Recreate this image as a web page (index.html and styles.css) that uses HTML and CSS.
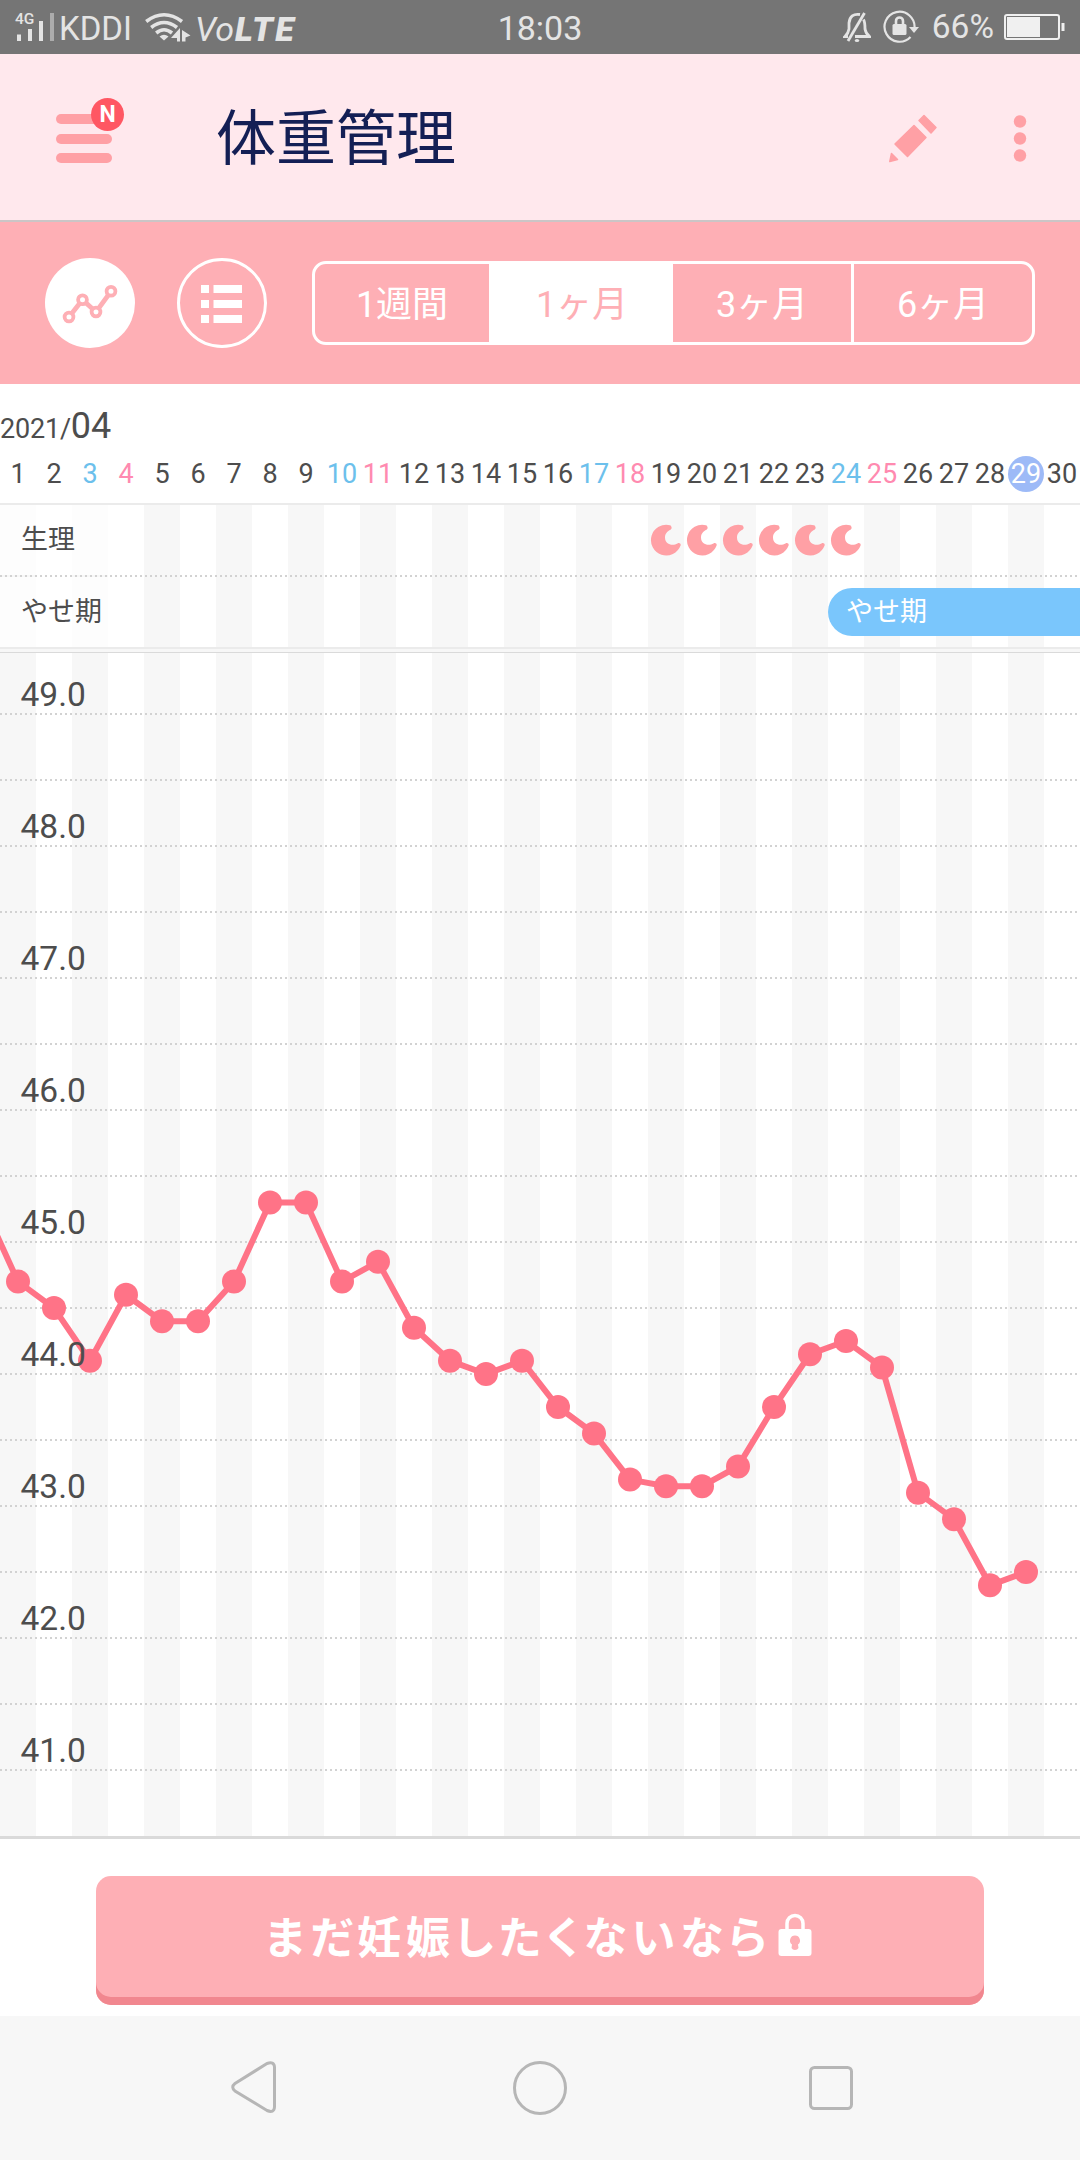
FILE: index.html
```html
<!DOCTYPE html>
<html lang="ja">
<head>
  <meta charset="UTF-8" />
  <meta name="viewport" content="width=device-width, initial-scale=1.0" />
  <title>体重管理</title>
  <link rel="stylesheet" href="styles.css">
</head>
<body>
  <div class="status-bar">
    <div class="status-left">
      <div class="signal">
        <span class="net">4G</span>
        <svg width="40" height="54" viewBox="0 0 40 54">
          <path d="M2 34.5h4v6.5h-4zM13 29h4v12h-4zM24 21h4v20h-4z" fill="#e4e4e4" />
          <path d="M35 13h4v28h-4z" fill="#acacac" />
        </svg>
      </div>
      <span class="carrier">KDDI</span>
      <svg class="wifi" width="46" height="54" viewBox="0 0 46 54">
        <g fill="none" stroke="#e4e4e4" stroke-width="3.6">
          <path d="M1.2 21.5Q19 8 37 21.500" />
          <path d="M6.200 27.500Q19 17.500 32 27.500" />
          <path d="M11.200 33Q19 26.500 27 33" />
        </g>
        <path d="M14.500 36.500Q19 33 23.500 36.500L19 40.500z" fill="#e4e4e4" />
        <path d="M35 28v13.500h-3v-3.500h-6zM37 41.500v-11.500l8.500 5.500-5 2v4z" fill="#e4e4e4" />
      </svg>
      <span class="volte">Vo<b>LTE</b></span>
    </div>
    <span class="clock">18:03</span>
    <div class="status-right">
      <svg width="28" height="54" viewBox="0 0 28 54">
        <path d="M17 14.500Q7 13 6 23v6Q5.500 33 2 36.500h3M20.500 19.500Q22 22 22 29Q22.500 33 26.500 36.500H12" fill="none" stroke="#e4e4e4" stroke-width="2.800" />
        <path d="M21.500 13L5 41" stroke="#e4e4e4" stroke-width="2.800" />
        <ellipse cx="14" cy="40.500" rx="2.200" ry="1.600" fill="#e4e4e4" />
      </svg>
      <svg class="rotate" width="38" height="54" viewBox="0 0 38 54">
        <path d="M27.500 37A15 15 0 1 1 31.500 28" fill="none" stroke="#e4e4e4" stroke-width="2.200" />
        <path d="M26 27h10l-5 6z" fill="#e4e4e4" />
        <rect x="9.500" y="24" width="14" height="11" rx="1.500" fill="#e4e4e4" />
        <path d="M13 25v-4a3.500 3.500 0 0 1 7 0v4" fill="none" stroke="#e4e4e4" stroke-width="2.600" />
      </svg>
      <span class="percent">66%</span>
      <svg width="61" height="54" viewBox="0 0 61 54">
        <rect x="1" y="15" width="54" height="24" rx="2" fill="none" stroke="#f0f0f0" stroke-width="2" />
        <path d="M3 17h33v20h-33zM57.500 23h3v8h-3z" fill="#f0f0f0" />
      </svg>
    </div>
  </div>

  <header>
    <div class="menu">
      <span class="bar"></span>
      <span class="bar"></span>
      <span class="bar"></span>
      <span class="badge">N</span>
    </div>
    <h1>体重管理</h1>
    <svg class="pencil" width="50" height="50" viewBox="0 0 50 50">
      <g fill="#ffa0a5" stroke="#ffa0a5" stroke-width="1.500" stroke-linejoin="round">
        <path d="M36 1.500L48 13.500L43 19L31 6.500z" />
        <path d="M26 11.500L38 23.500L19.500 42.500L7 30z" />
        <path d="M3.500 39.500L9.500 45.500L1.800 47.500z" />
      </g>
    </svg>
    <svg class="more" width="14" height="50" viewBox="0 0 14 50">
      <g fill="#ffa0a5">
        <circle cx="7" cy="7.500" r="6.200" />
        <circle cx="7" cy="24.500" r="6.200" />
        <circle cx="7" cy="41.500" r="6.200" />
      </g>
    </svg>
  </header>

  <div class="toolbar">
    <svg class="round" width="90" height="90" viewBox="0 0 90 90">
      <circle cx="45" cy="45" r="45" fill="#fff" />
      <path d="M24 59L37.500 41.700L51 54L66 33.300" fill="none" stroke="#feafb5" stroke-width="4.800" />
      <g fill="#fff" stroke="#feafb5" stroke-width="3.800">
        <circle cx="24" cy="59" r="4.400" />
        <circle cx="37.500" cy="41.700" r="4.400" />
        <circle cx="51" cy="54" r="4.400" />
        <circle cx="66" cy="33.300" r="4.400" />
      </g>
    </svg>
    <svg class="round" width="90" height="90" viewBox="0 0 90 90">
      <circle cx="45" cy="45" r="43.500" fill="none" stroke="#fff" stroke-width="3" />
      <path d="M24 27h8v8h-8zM36.500 27h28.500v8h-28.500zM24 42h8v8h-8zM36.500 42h28.500v8h-28.500zM24 57h8v8h-8zM36.500 57h28.500v8h-28.500z" fill="#fff" />
    </svg>
    <div class="tabs">
      <div class="tab">1週間</div>
      <div class="tab active">1ヶ月</div>
      <div class="tab">3ヶ月</div>
      <div class="tab last">6ヶ月</div>
    </div>
  </div>

  <main>
    <p class="month">2021/<span>04</span></p>
    <div class="days" id="days"></div>

    <div class="rows">
      <div class="row">
        <div class="label">生理</div>
        <svg class="moons" id="moons" width="216" height="36" viewBox="0 0 216 36"></svg>
      </div>
      <div class="row">
        <div class="label">やせ期</div>
        <div class="period">やせ期</div>
      </div>
    </div>

    <svg class="chart" id="chart" width="1080" height="1184" viewBox="0 652 1080 1184"></svg>
  </main>

  <div class="banner">
    <div class="cta">
      <span>まだ妊娠したくないなら</span>
      <svg width="34" height="44" viewBox="0 0 34 44">
        <path d="M9 18v-7.500a8 8 0 0 1 16 0v7.500" fill="none" stroke="#fff" stroke-width="3.500" />
        <rect x="0.500" y="16" width="33" height="27" rx="3" fill="#fff" />
        <path d="M17 22.500a5 5 0 0 1 3 9l0.500 3.500q-1 2-3.500 2t-3.500-2l0.500-3.500a5 5 0 0 1 3-9z" fill="#feafb5" />
      </svg>
    </div>
  </div>

  <nav>
    <svg width="46" height="54" viewBox="0 0 46 54">
      <path d="M36 2.500L4 22.500Q-0.500 26 4 30L36 49.500Q43 52.500 43.500 46V6Q43 0 36 2.500z" fill="none" stroke="#b6b6b6" stroke-width="3" />
    </svg>
    <svg class="home" width="54" height="54" viewBox="0 0 54 54">
      <circle cx="27" cy="27" r="25.500" fill="none" stroke="#b6b6b6" stroke-width="3" />
    </svg>
    <svg width="44" height="44" viewBox="0 0 44 44">
      <rect x="1.500" y="1.500" width="41" height="41" rx="4" fill="none" stroke="#b6b6b6" stroke-width="3" />
    </svg>
  </nav>

  <script>
    const colW = 36;
    const today = 29;
    // first value is 3/31, just off the left edge
    const weights = [
      45.3, 44.7, 44.5, 44.1, 44.6, 44.4, 44.4, 44.7, 45.3, 45.3, 44.7,
      44.85, 44.35, 44.1, 44.0, 44.1, 43.75, 43.55, 43.2, 43.15, 43.15,
      43.3, 43.75, 44.15, 44.25, 44.05, 43.1, 42.9, 42.4, 42.5
    ];
    const yOf = kg => 714 + (49 - kg) * 132;

    // day header
    let days = '';
    for (let d = 1; d <= 30; d++) {
      let cls = 'day';
      if (d % 7 === 3) cls += ' sat';
      if (d % 7 === 4) cls += ' sun';
      if (d === today) cls += ' today';
      days += `<span class="${cls}">${d}</span>`;
    }
    document.getElementById('days').innerHTML = days;

    // period marks, 19th to 24th
    let moons = '';
    for (let i = 0; i < 6; i++) {
      moons += `<path transform="translate(${i * colW + 18} 18.5)" fill="#ffa0a5" d="M4 -15.200A15.300 15.300 0 1 0 14.600 5C15.200 3 13 1.800 11.500 3C7 5.500 -1 4.500 -1 -3C-1 -7 1.500 -9.500 4.500 -10.800C6.500 -12 5.500 -14.800 4 -15.200z" />`;
    }
    document.getElementById('moons').innerHTML = moons;

    // weight chart
    let svg = '<path class="top" d="M0 652.5H1080" />';
    for (let kg = 49; kg >= 41; kg -= 0.5) {
      svg += `<path class="grid" d="M0 ${yOf(kg)}H1080" />`;
    }
    const pts = weights.map((w, i) => [i * colW - 18, yOf(w)]);
    svg += `<polyline class="line" points="${pts.join(' ')}" />`;
    pts.forEach(p => {
      svg += `<circle class="dot" cx="${p[0]}" cy="${p[1]}" r="12" />`;
    });
    for (let kg = 49; kg >= 41; kg--) {
      svg += `<text x="20.5" y="${yOf(kg) - 8}">${kg.toFixed(1)}</text>`;
    }
    document.getElementById('chart').innerHTML = svg;
  </script>
</body>
</html>
```
FILE: styles.css
```css
* {
  margin: 0;
  padding: 0;
  box-sizing: border-box;
}
body {
  width: 1080px;
  height: 2160px;
  font-family: Roboto, 'Noto Sans CJK JP', sans-serif;
  background: #fff;
  color: #4d4d4d;
  overflow: hidden;
}
svg {
  display: block;
  flex: none;
}

/* status bar */
.status-bar {
  height: 54px;
  background: #757575;
  color: #e4e4e4;
  font-size: 33px;
  line-height: 54px;
  display: grid;
  grid-template-columns: 1fr auto 1fr;
}
.status-left,
.status-right {
  display: flex;
}
.status-left {
  padding-left: 15px;
}
.status-right {
  justify-content: flex-end;
  padding-right: 15px;
}
.signal {
  position: relative;
  margin-right: 4px;
}
.net {
  position: absolute;
  left: 0;
  top: 10px;
  font-size: 15.5px;
  line-height: 18px;
  font-weight: 500;
}
.carrier {
  width: 86px;
  padding-top: 2px;
}
.wifi {
  margin-right: 4px;
}
.volte {
  font-style: italic;
  font-size: 34px;
  padding-top: 2px;
}
.volte b {
  font-weight: 900;
  margin-left: 1px;
  letter-spacing: 2.5px;
}
.clock {
  font-size: 34px;
  padding-top: 1px;
}
.rotate {
  margin-left: 12px;
}
.percent {
  margin: 0 10px 0 11px;
  font-size: 33.5px;
}

/* header */
header {
  height: 168px;
  background: #ffe8ed;
  border-bottom: 2px solid #cbc5c6;
  display: flex;
  align-items: center;
  padding: 3px 53px 0 56px;
}
.menu {
  position: relative;
  width: 56px;
  height: 49px;
  display: flex;
  flex-direction: column;
  justify-content: space-between;
}
.bar {
  height: 10px;
  border-radius: 5px;
  background: #ffa0a5;
}
.badge {
  position: absolute;
  left: 35px;
  top: -16px;
  width: 33px;
  height: 33px;
  border-radius: 50%;
  background: #ff5763;
  color: #fff;
  font-size: 23px;
  font-weight: 700;
  line-height: 33px;
  text-align: center;
}
h1 {
  flex: 1;
  margin-left: 104px;
  padding-top: 3px;
  font-size: 60px;
  font-weight: 400;
  line-height: 80px;
  color: #141f55;
}
.more {
  margin-left: 75px;
}

/* toolbar */
.toolbar {
  height: 162px;
  background: #feafb5;
  display: flex;
  align-items: center;
  padding: 0 45px;
}
.round {
  margin-right: 42px;
}
.tabs {
  flex: 1;
  height: 84px;
  margin-left: 3px;
  border: 3px solid #fff;
  border-radius: 14px;
  display: grid;
  grid-template-columns: 174px 184px 178px 181px;
}
.tab {
  color: #fff;
  font-size: 36px;
  line-height: 82px;
  height: 78px;
  text-align: center;
}
.tab.active {
  background: #fff;
  color: #feafb5;
  padding-left: 2px;
}
.tab.last {
  border-left: 3px solid #fff;
}

/* dates */
.month {
  height: 72px;
  padding-top: 21px;
  font-size: 27px;
  line-height: 42px;
  letter-spacing: -0.2px;
}
.month span {
  font-size: 36px;
}
.days {
  display: grid;
  grid-template-columns: repeat(30, 36px);
  height: 47px;
}
.day {
  height: 36px;
  font-size: 27px;
  line-height: 36px;
  text-align: center;
}
.sat {
  color: #6cc0ec;
}
.sun {
  color: #ff8ab0;
}
.today {
  color: #fff;
  background: #9dbaf7;
  border-radius: 50%;
}

/* period rows, every other column is shaded */
.rows,
.chart {
  background: repeating-linear-gradient(90deg, #f7f7f7 0 36px, #fff 36px 72px);
}
.rows {
  height: 146px;
  border-top: 2px solid #ebebeb;
  border-bottom: 2px solid #ebebeb;
}
main {
  background: linear-gradient(#f7f7f7, #f7f7f7) 0 265px / 100% 3px no-repeat;
}
.chart {
  margin-top: 3px;
}
.row {
  display: flex;
  align-items: center;
  height: 70px;
}
.row:first-child {
  height: 72px;
  padding-bottom: 2px;
  background: repeating-linear-gradient(90deg, #d2d2d2 0 2px, transparent 2px 5px) 0 70px / 100% 2px no-repeat;
}
.label {
  width: 108px;
  height: 100%;
  padding-left: 21px;
  font-size: 27px;
  line-height: 70px;
  background: rgba(255, 255, 255, 0.7);
}
.moons {
  margin-left: 540px;
}
.period {
  flex: 1;
  height: 48px;
  margin-left: 720px;
  padding-left: 18px;
  border-radius: 24px 0 0 24px;
  background: #7ac6fc;
  color: #fff;
  font-size: 27px;
  line-height: 48px;
}

/* chart */
.top {
  stroke: #dadada;
}
.grid {
  stroke: #d2d2d2;
  stroke-width: 2;
  stroke-dasharray: 2 3;
}
.line {
  fill: none;
  stroke: #ff7387;
  stroke-width: 6;
}
.dot {
  fill: #ff7387;
}
.chart text {
  font-size: 33.5px;
  fill: #4d4d4d;
}

/* banner */
.banner {
  height: 180px;
  border-top: 3px solid #dadada;
  padding: 37px 96px 0;
}
.cta {
  height: 129px;
  padding-right: 3px;
  padding-bottom: 11px;
  border-radius: 15px;
  background: #feafb5;
  box-shadow: inset 0 -8px 0 #f1878f;
  color: #fff;
  display: flex;
  align-items: center;
  justify-content: center;
}
.cta span {
  font-size: 44px;
  font-weight: 700;
  font-feature-settings: 'palt';
  letter-spacing: 5px;
  margin-right: 6px;
}

/* android navigation */
nav {
  height: 144px;
  background: #f7f7f7;
  display: flex;
  align-items: center;
  justify-content: space-between;
  padding: 0 227px 0 231px;
}
.home {
  margin-right: 6px;
}
```
